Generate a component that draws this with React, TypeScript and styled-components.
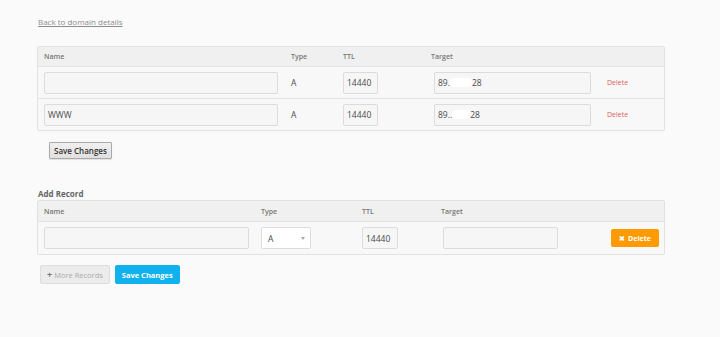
import React from "react";
import styled, { createGlobalStyle } from "styled-components";

const Global = createGlobalStyle`
  html, body { margin: 0; padding: 0; background: #fafafa; }
  body { font-family: "Open Sans", "Liberation Sans", sans-serif; color: #555; }
  * { box-sizing: border-box; }
`;

const Page = styled.div`
  width: 720px;
  height: 337px;
  padding: 15px 55px 0 37px;
  display: flex;
  flex-direction: column;
`;

const BackLink = styled.a`
  font-size: 8px;
  color: #8c8c8c;
  text-decoration: underline;
  margin-left: 1px;
  line-height: 13px;
  align-self: flex-start;
`;

const Panel = styled.div<{ $top: number }>`
  margin-top: ${(p) => p.$top}px;
  border: 1px solid #e2e2e2;
  border-radius: 2px;
  background: #f8f8f8;
  width: 628px;
`;

const Row = styled.div<{ $cols: string; $h: number; $head?: boolean; $last?: boolean }>`
  display: grid;
  grid-template-columns: ${(p) => p.$cols};
  align-items: center;
  height: ${(p) => p.$h}px;
  background: ${(p) => (p.$head ? "#f0f0f0" : "#f8f8f8")};
  border-bottom: ${(p) => (p.$last ? "none" : "1px solid #e4e4e4")};
`;

const HeadCell = styled.div`
  font-size: 7px;
  font-weight: 600;
  color: #777;
  padding-left: 6px;
`;

const Cell = styled.div`
  padding-left: 6px;
  font-size: 8.5px;
  color: #4a4a4a;
  display: flex;
  align-items: center;
`;

const Field = styled.div<{ $w: number; $shift?: number }>`
  width: ${(p) => p.$w}px;
  margin-left: ${(p) => p.$shift ?? 0}px;
  height: 22px;
  border: 1px solid #dcdcdc;
  border-radius: 2px;
  background: #f6f6f6;
  font-size: 8.5px;
  color: #4a4a4a;
  display: flex;
  align-items: center;
  padding-left: 3px;
  white-space: nowrap;
`;

const Redact = styled.span<{ $w: number }>`
  display: inline-block;
  width: ${(p) => p.$w}px;
  height: 9px;
  background: #ffffff;
  border-radius: 4px;
`;

const Select = styled.div`
  width: 50px;
  height: 22px;
  border: 1px solid #dcdcdc;
  border-radius: 2px;
  background: #fff;
  font-size: 8.5px;
  color: #4a4a4a;
  display: flex;
  align-items: center;
  justify-content: space-between;
  padding: 0 5px 0 6px;
`;

const Caret = styled.span`
  width: 0;
  height: 0;
  border-left: 2.5px solid transparent;
  border-right: 2.5px solid transparent;
  border-top: 3px solid #aaa;
`;

const DeleteLink = styled.span`
  font-size: 7px;
  color: #e06060;
`;

const GrayButton = styled.button`
  margin: 11px 0 0 12px;
  align-self: flex-start;
  height: 17px;
  padding: 0 4px;
  font-family: inherit;
  font-size: 8px;
  font-weight: 600;
  color: #333;
  background: linear-gradient(#f0f0f0, #e0e0e0);
  border: 1px solid #a9a9a9;
  border-radius: 1px;
  box-shadow: 0 1px 1px rgba(0, 0, 0, 0.1);
`;

const SectionTitle = styled.div`
  margin-top: 30px;
  margin-left: 1px;
  font-size: 8px;
  font-weight: 700;
  color: #666;
  line-height: 10px;
`;

const OrangeButton = styled.button`
  width: 48px;
  height: 18px;
  margin-left: 3px;
  background: #ff9a00;
  color: #fff;
  border: none;
  border-radius: 2px;
  font-family: inherit;
  font-size: 7px;
  font-weight: 700;
  display: flex;
  align-items: center;
  justify-content: center;
  gap: 3px;
  padding: 0;
`;

const Actions = styled.div`
  display: flex;
  gap: 5px;
  margin-top: 10px;
  margin-left: 3px;
`;

const ActionButton = styled.button<{ $primary?: boolean }>`
  height: 19px;
  padding: 0 6px;
  font-family: inherit;
  font-size: 7.5px;
  font-weight: ${(p) => (p.$primary ? 700 : 400)};
  color: ${(p) => (p.$primary ? "#fff" : "#aaa")};
  background: ${(p) => (p.$primary ? "#0fb2ee" : "#ececec")};
  border: 1px solid ${(p) => (p.$primary ? "#0fb2ee" : "#dddddd")};
  border-radius: 2px;
  display: flex;
  align-items: center;
  gap: 2px;
`;

const Plus = styled.span`
  font-weight: 700;
  color: #777;
  font-size: 9px;
`;

const cols1 = "247px 52px 88px 176px 1fr";
const cols2 = "217px 101px 79px 167px 1fr";

const records = [
  { name: "", redact: 22, prefix: "89." },
  { name: "WWW", redact: 18, prefix: "89.." },
];

export default function App() {
  return (
    <Page>
      <Global />
      <BackLink href="#">Back to domain details</BackLink>
      <Panel $top={18}>
        <Row $cols={cols1} $h={20} $head>
          <HeadCell>Name</HeadCell>
          <HeadCell>Type</HeadCell>
          <HeadCell>TTL</HeadCell>
          <HeadCell>Target</HeadCell>
          <HeadCell />
        </Row>
        {records.map((r, i) => (
          <Row key={i} $cols={cols1} $h={i === 0 ? 32 : 31} $last={i === records.length - 1}>
            <Cell>
              <Field $w={234}>{r.name}</Field>
            </Cell>
            <Cell>A</Cell>
            <Cell>
              <Field $w={35}>14440</Field>
            </Cell>
            <Cell>
              <Field $w={157} $shift={3}>
                {r.prefix}
                <Redact $w={r.redact} />
                28
              </Field>
            </Cell>
            <Cell>
              <DeleteLink>Delete</DeleteLink>
            </Cell>
          </Row>
        ))}
      </Panel>
      <GrayButton>Save Changes</GrayButton>
      <SectionTitle>Add Record</SectionTitle>
      <Panel $top={1}>
        <Row $cols={cols2} $h={21} $head>
          <HeadCell>Name</HeadCell>
          <HeadCell>Type</HeadCell>
          <HeadCell>TTL</HeadCell>
          <HeadCell>Target</HeadCell>
          <HeadCell />
        </Row>
        <Row $cols={cols2} $h={32} $last>
          <Cell>
            <Field $w={205} />
          </Cell>
          <Cell>
            <Select>
              A<Caret />
            </Select>
          </Cell>
          <Cell>
            <Field $w={36}>14440</Field>
          </Cell>
          <Cell>
            <Field $w={115} $shift={2} />
          </Cell>
          <Cell>
            <OrangeButton>
              <span>✖</span>Delete
            </OrangeButton>
          </Cell>
        </Row>
      </Panel>
      <Actions>
        <ActionButton>
          <Plus>+</Plus>More Records
        </ActionButton>
        <ActionButton $primary>Save Changes</ActionButton>
      </Actions>
    </Page>
  );
}
